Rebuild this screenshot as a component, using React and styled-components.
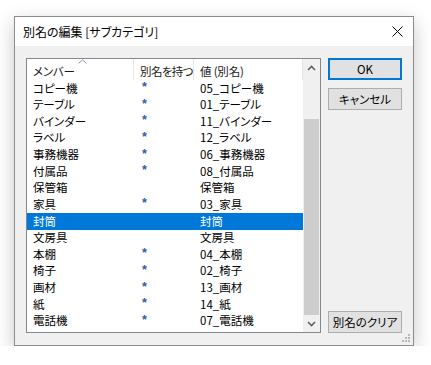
import React from "react";
import styled, { createGlobalStyle } from "styled-components";

const GlobalStyle = createGlobalStyle`
  html, body {
    margin: 0;
    background: #ffffff;
  }
  body {
    font-family: "Noto Sans CJK JP", "Liberation Sans", sans-serif;
    font-size: 11.5px;
    color: #000;
  }
`;

const Page = styled.div`
  padding: 16px 0 0 14px;
`;

// Dialog window
const Window = styled.div`
  position: relative;
  width: 400px;
  height: 330px;
  box-sizing: border-box;
  border: 1px solid #8c8c8c;
  background: #f0f0f0;
  box-shadow: 0 6px 18px rgba(0, 0, 0, 0.22);
  display: flex;
  flex-direction: column;
`;

const TitleBar = styled.div`
  height: 29px;
  background: #ffffff;
  display: flex;
  align-items: center;
  justify-content: space-between;
  padding: 0 10px 0 8px;
`;

const Title = styled.span`
  font-size: 12px;
  font-feature-settings: "palt";
  line-height: 1;
`;

const Body = styled.div`
  flex: 1;
  display: flex;
  gap: 7px;
  padding: 12px 11px 12px 11px;
`;

const ListBox = styled.div`
  width: 295px;
  box-sizing: border-box;
  border: 1px solid #828790;
  background: #ffffff;
  display: flex;
`;

const ListMain = styled.div`
  flex: 1;
  display: flex;
  flex-direction: column;
  overflow: hidden;
`;

const Header = styled.div`
  position: relative;
  height: 21px;
  display: grid;
  grid-template-columns: 107px 60px 1fr;
  border-right: 1px solid #e5e5e5;
`;

const HeaderCell = styled.div`
  display: flex;
  align-items: center;
  padding-left: 6px;
  padding-top: 2px;
  border-right: ${(p) => (p.$last ? "none" : "1px solid #e5e5e5")};
  font-feature-settings: "palt";
  letter-spacing: ${(p) => (p.$tight ? "-0.6px" : "-0.2px")};
  color: #1a1a1a;
  white-space: nowrap;
  overflow: hidden;
`;

const SortArrow = styled.svg`
  position: absolute;
  left: 51px;
  top: 0;
`;

const Row = styled.div`
  height: 16.64px;
  display: grid;
  grid-template-columns: 107px 60px 1fr;
  align-items: center;
  background: ${(p) => (p.$selected ? "#0078d7" : "transparent")};
  color: ${(p) => (p.$selected ? "#ffffff" : "#000000")};
`;

const Cell = styled.div`
  padding-left: 6px;
  white-space: nowrap;
  font-feature-settings: "palt";
  line-height: 1;
`;

const Star = styled.div`
  padding-left: 8px;
  padding-bottom: 2px;
  color: #2f5ea8;
  font-family: "Liberation Sans", sans-serif;
  font-weight: bold;
  font-size: 12.5px;
  line-height: 1;
`;

// Vertical scrollbar
const ScrollBar = styled.div`
  width: 17px;
  background: #f0f0f0;
  display: flex;
  flex-direction: column;
`;

const ScrollArrow = styled.div`
  height: 17px;
  display: flex;
  align-items: center;
  justify-content: center;
`;

const Track = styled.div`
  flex: 1;
  display: flex;
  flex-direction: column;
`;

const Thumb = styled.div`
  margin: 43px 1px 0 1px;
  height: 196px;
  background: #cdcdcd;
`;

const ButtonColumn = styled.div`
  width: 74px;
  display: flex;
  flex-direction: column;
  gap: 8px;
`;

const Button = styled.div`
  height: 22px;
  box-sizing: border-box;
  display: flex;
  align-items: center;
  justify-content: center;
  background: #e1e1e1;
  border: ${(p) => (p.$default ? "2px solid #0078d7" : "1px solid #adadad")};
  font-feature-settings: "palt";
  margin-top: ${(p) => (p.$bottom ? "auto" : "0")};
`;

const Grip = styled.svg`
  position: absolute;
  right: 2px;
  bottom: 2px;
`;

const rows = [
  ["コピー機", true, "05_コピー機"],
  ["テーブル", true, "01_テーブル"],
  ["バインダー", true, "11_バインダー"],
  ["ラベル", true, "12_ラベル"],
  ["事務機器", true, "06_事務機器"],
  ["付属品", true, "08_付属品"],
  ["保管箱", false, "保管箱"],
  ["家具", true, "03_家具"],
  ["封筒", false, "封筒", true],
  ["文房具", false, "文房具"],
  ["本棚", true, "04_本棚"],
  ["椅子", true, "02_椅子"],
  ["画材", true, "13_画材"],
  ["紙", true, "14_紙"],
  ["電話機", true, "07_電話機"],
];

const Chevron = ({ up }) => (
  <svg width="9" height="6" viewBox="0 0 9 6">
    <path
      d={up ? "M1 5 L4.5 1.5 L8 5" : "M1 1 L4.5 4.5 L8 1"}
      fill="none"
      stroke="#606060"
      strokeWidth="1.6"
    />
  </svg>
);

const App = () => {
  return (
    <Page>
      <GlobalStyle />
      <Window>
        <TitleBar>
          <Title>別名の編集 [サブカテゴリ]</Title>
          <svg width="11" height="11" viewBox="0 0 11 11">
            <path d="M0.5 0.5 L10.5 10.5 M10.5 0.5 L0.5 10.5" stroke="#000" strokeWidth="1" />
          </svg>
        </TitleBar>
        <Body>
          <ListBox>
            <ListMain>
              <Header>
                <HeaderCell>メンバー</HeaderCell>
                <HeaderCell $tight>別名を持つ</HeaderCell>
                <HeaderCell $last>値 (別名)</HeaderCell>
                <SortArrow width="9" height="5" viewBox="0 0 9 5">
                  <path d="M0.5 4.5 L4.5 0.8 L8.5 4.5" fill="none" stroke="#8a96a6" strokeWidth="1" />
                </SortArrow>
              </Header>
              {rows.map(([name, has, alias, selected]) => (
                <Row key={name} $selected={selected}>
                  <Cell>{name}</Cell>
                  <Star>{has ? "*" : ""}</Star>
                  <Cell>{alias}</Cell>
                </Row>
              ))}
            </ListMain>
            <ScrollBar>
              <ScrollArrow>
                <Chevron up />
              </ScrollArrow>
              <Track>
                <Thumb />
              </Track>
              <ScrollArrow>
                <Chevron />
              </ScrollArrow>
            </ScrollBar>
          </ListBox>
          <ButtonColumn>
            <Button $default>OK</Button>
            <Button>キャンセル</Button>
            <Button $bottom>別名のクリア</Button>
          </ButtonColumn>
        </Body>
        <Grip width="9" height="9" viewBox="0 0 9 9">
          <rect x="6" y="0" width="2" height="2" fill="#b8b8b8" />
          <rect x="3" y="3" width="2" height="2" fill="#b8b8b8" />
          <rect x="6" y="3" width="2" height="2" fill="#b8b8b8" />
          <rect x="0" y="6" width="2" height="2" fill="#b8b8b8" />
          <rect x="3" y="6" width="2" height="2" fill="#b8b8b8" />
          <rect x="6" y="6" width="2" height="2" fill="#b8b8b8" />
        </Grip>
      </Window>
    </Page>
  );
};

export default App;
